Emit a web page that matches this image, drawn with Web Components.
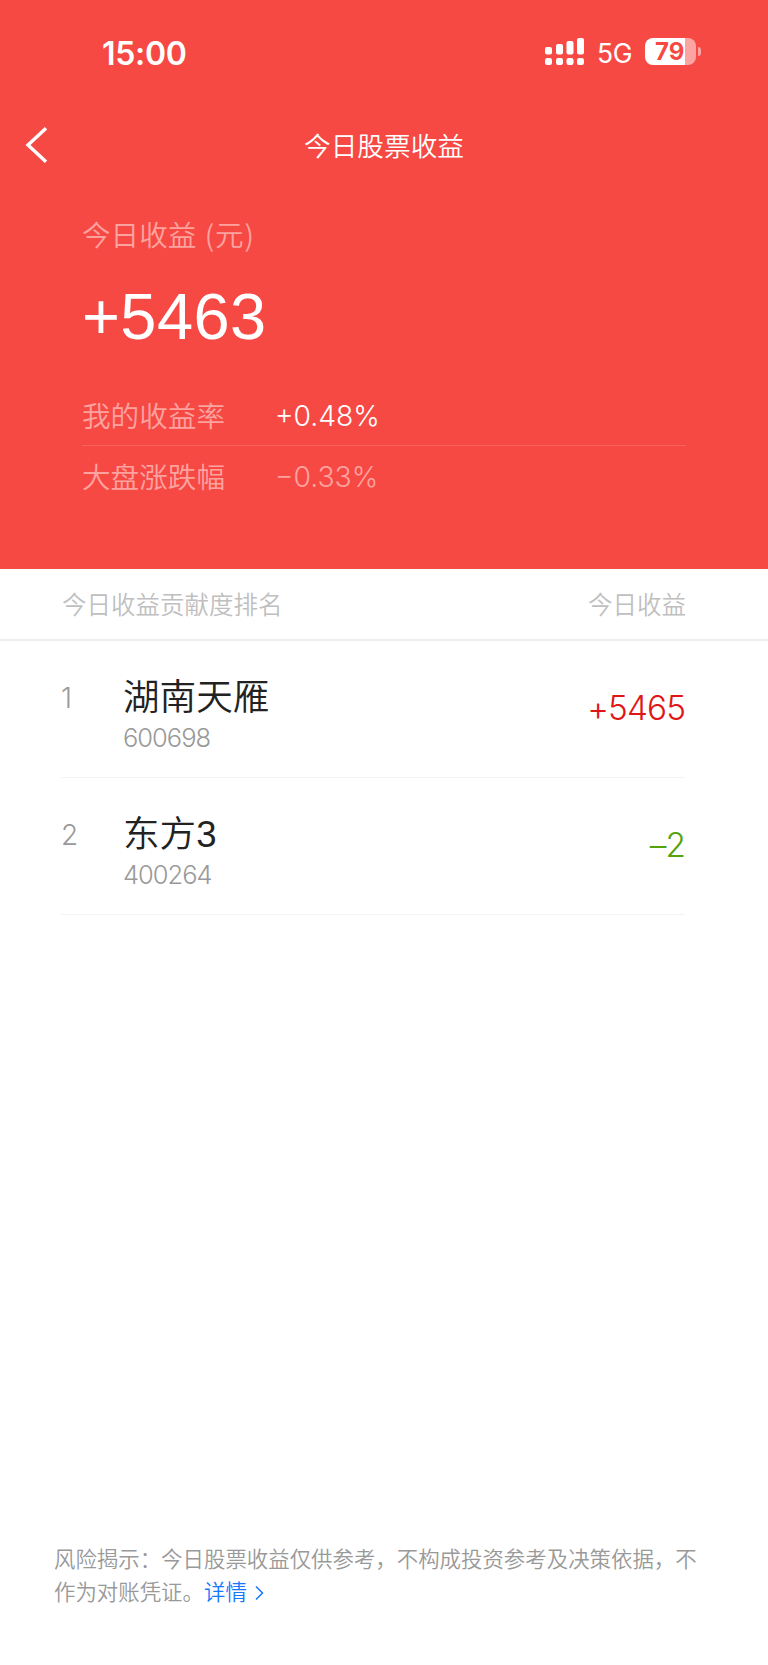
<!DOCTYPE html>
<html lang="zh-CN">
<head>
<meta charset="UTF-8">
<meta name="viewport" content="width=device-width, initial-scale=1.0">
<title>今日股票收益</title>
<style>
    body {
        margin: 0;
        background: #fff;
        font-family: "Liberation Sans", "Noto Sans CJK SC", sans-serif;
        font-weight: 350;
    }
</style>
</head>
<body>
<profit-app></profit-app>

<script>
class StatusBar extends HTMLElement {
    constructor(){
        super();
        this.attachShadow({mode: 'open'})
    }

    connectedCallback(){
        this.shadowRoot.innerHTML = `
        <style>
            :host {
                display: flex;
                align-items: center;
                height: 104px;
                padding: 0 67px 0 102px;
                box-sizing: border-box;
                color: #fff;
                font-family: Inter, sans-serif;
            }
            .time {
                flex: 1;
                font-size: 32px;
                font-weight: 600;
                letter-spacing: -0.3px;
                margin-top: 2px;
            }
            .signal {
                display: block;
                margin: 0 13px 1px 0;
            }
            .net {
                font-size: 26.5px;
                font-weight: 400;
                letter-spacing: -0.5px;
                margin: 2px 13px 0 0;
            }
            .battery {
                display: flex;
                align-items: center;
                gap: 2px;
                margin-bottom: 1px;
            }
            .cell {
                width: 51px;
                height: 27px;
                line-height: 28px;
                border-radius: 8px;
                background: linear-gradient(90deg, #fff 40px, #fba4a1 40px);
                color: #f74944;
                font-size: 24px;
                font-weight: 700;
                letter-spacing: 0;
                text-indent: 10px;
            }
            .cap {
                width: 3px;
                height: 9px;
                border-radius: 0 4px 4px 0;
                background: #fba4a1;
            }
        </style>
        <span class="time">15:00</span>
        <svg class="signal" width="39" height="27" viewBox="0 0 39 27" fill="#fff">
            <rect x="0" y="9" width="7" height="7.5" rx="2"/>
            <rect x="11" y="6" width="7" height="10.5" rx="2"/>
            <rect x="21.5" y="3" width="7" height="13.5" rx="2"/>
            <rect x="32" y="0" width="7" height="16.5" rx="2"/>
            <rect x="0" y="20" width="7" height="7" rx="2.2"/>
            <rect x="11" y="20" width="7" height="7" rx="2.2"/>
            <rect x="21.5" y="20" width="7" height="7" rx="2.2"/>
            <rect x="32" y="20" width="7" height="7" rx="2.2"/>
        </svg>
        <span class="net">5G</span>
        <div class="battery"><div class="cell">79</div><div class="cap"></div></div>
    `;
  }
}

class NavBar extends HTMLElement {
    constructor(){
        super();
        this.attachShadow({mode: 'open'})
    }

    connectedCallback(){
        this.shadowRoot.innerHTML = `
        <style>
            :host {
                display: grid;
                grid-template-columns: 80px 1fr 80px;
                align-items: center;
                height: 82px;
                color: #fff;
                font-size: 26.67px;
                text-align: center;
            }
            svg {
                display: block;
                margin-left: 25px;
            }
            .title {
                padding-bottom: 2px;
            }
        </style>
        <svg width="24" height="36" viewBox="0 0 24 36" fill="none" stroke="#fff" stroke-width="3.4">
            <path d="M21 1.2 L3 18 L21 34.8"/>
        </svg>
        <div class="title"><slot></slot></div>
    `;
  }
}

class RateRow extends HTMLElement {
    constructor(){
        super();
        this.attachShadow({mode: 'open'})
    }

    connectedCallback(){
        this.shadowRoot.innerHTML = `
        <style>
            :host {
                display: flex;
                align-items: center;
                height: 60px;
                font-size: 28.6px;
            }
            .label {
                width: 193px;
                padding-bottom: 1px;
                color: #fca3a0;
            }
            .value {
                padding-top: 2px;
                font-family: Inter, sans-serif;
                font-size: 28.3px;
            }
        </style>
        <span class="label">${this.getAttribute('label')}</span>
        <span class="value"><slot></slot></span>
    `;
  }
}

class ProfitSummary extends HTMLElement {
    constructor(){
        super();
        this.attachShadow({mode: 'open'})
    }

    connectedCallback(){
        this.shadowRoot.innerHTML = `
        <style>
            :host {
                display: block;
                height: 383px;
                box-sizing: border-box;
                padding: 27px 82px 0;
                color: #fff;
            }
            .label {
                height: 42px;
                line-height: 42px;
                font-family: "Noto Sans CJK SC", sans-serif;
                font-size: 28.6px;
                color: #fca3a0;
            }
            .unit {
                margin-left: 2px;
                letter-spacing: 0.8px;
            }
            .total {
                height: 90px;
                line-height: 90px;
                margin: 17px 0 23px;
                font-size: 65px;
                letter-spacing: 0.4px;
            }
            .rates rate-row + rate-row {
                border-top: 1px solid #f8605c;
                color: #fca3a0;
            }
        </style>
        <div class="label">今日收益 <span class="unit">(元)</span></div>
        <div class="total">+5463</div>
        <div class="rates">
            <rate-row label="我的收益率">+0.48%</rate-row>
            <rate-row label="大盘涨跌幅">−0.33%</rate-row>
        </div>
    `;
  }
}

class RankHeader extends HTMLElement {
    constructor(){
        super();
        this.attachShadow({mode: 'open'})
    }

    connectedCallback(){
        this.shadowRoot.innerHTML = `
        <style>
            :host {
                display: flex;
                justify-content: space-between;
                align-items: center;
                height: 72px;
                box-sizing: border-box;
                padding: 0 82px 1px 62px;
                border-bottom: 2px solid #eee;
                color: #bfbfbf;
                font-size: 24.5px;
            }
        </style>
        <slot></slot>
    `;
  }
}

class RankItem extends HTMLElement {
    constructor(){
        super();
        this.attachShadow({mode: 'open'})
    }

    connectedCallback(){
        this.shadowRoot.innerHTML = `
        <style>
            :host {
                display: grid;
                grid-template-columns: 62px 1fr auto;
                height: 137px;
                box-sizing: border-box;
                margin: 0 83px 0 61px;
                border-bottom: 1px solid #f4f4f4;
            }
            .rank, .code, .value {
                font-family: Inter, sans-serif;
            }
            .rank {
                padding-top: 37px;
                line-height: 40px;
                font-size: 28px;
                color: #999;
            }
            .name {
                padding-top: 34px;
                line-height: 46px;
                font-size: 36.6px;
                color: #222;
            }
            .code {
                line-height: 34px;
                font-size: 25.5px;
                letter-spacing: -1px;
                color: #999;
            }
            .value {
                padding-top: 46px;
                line-height: 42px;
                font-size: 33.3px;
                letter-spacing: -0.9px;
                color: #e01515;
            }
            :host([down]) .value {
                color: #55a30b;
            }
        </style>
        <div class="rank">${this.getAttribute('rank')}</div>
        <div>
            <div class="name"><slot></slot></div>
            <div class="code">${this.getAttribute('code')}</div>
        </div>
        <div class="value">${this.getAttribute('value')}</div>
    `;
  }
}

class RiskNotice extends HTMLElement {
    constructor(){
        super();
        this.attachShadow({mode: 'open'})
    }

    connectedCallback(){
        this.shadowRoot.innerHTML = `
        <style>
            :host {
                display: block;
                margin-top: auto;
                padding: 0 60px 56px 54px;
                font-size: 21.43px;
                line-height: 32.3px;
                color: #999;
            }
            .link {
                color: #1677ff;
            }
            svg {
                margin-left: 7px;
                vertical-align: -1px;
            }
        </style>
        <slot></slot><span class="link">详情<svg width="11" height="15" viewBox="0 0 11 15" fill="none" stroke="currentColor" stroke-width="1.5"><path d="M2 0.5 L8.5 7 L2 13.5"/></svg></span>
    `;
  }
}

class ProfitApp extends HTMLElement {
    constructor(){
        super();
        this.attachShadow({mode: 'open'})
    }

    connectedCallback(){
        this.shadowRoot.innerHTML = `
        <style>
            :host {
                display: flex;
                flex-direction: column;
                height: 1665px;
            }
            .header {
                background: #f74944;
            }
        </style>
        <div class="header">
            <status-bar></status-bar>
            <nav-bar>今日股票收益</nav-bar>
            <profit-summary></profit-summary>
        </div>
        <rank-header><span>今日收益贡献度排名</span><span>今日收益</span></rank-header>
        <rank-item rank="1" code="600698" value="+5465">湖南天雁</rank-item>
        <rank-item rank="2" code="400264" value="–2" down>东方3</rank-item>
        <risk-notice>风险揭示：今日股票收益仅供参考，不构成投资参考及决策依据，不<br>作为对账凭证。</risk-notice>
    `;
  }
}

customElements.define('status-bar', StatusBar);
customElements.define('nav-bar', NavBar);
customElements.define('rate-row', RateRow);
customElements.define('profit-summary', ProfitSummary);
customElements.define('rank-header', RankHeader);
customElements.define('rank-item', RankItem);
customElements.define('risk-notice', RiskNotice);
customElements.define('profit-app', ProfitApp);
</script>
</body>
</html>
